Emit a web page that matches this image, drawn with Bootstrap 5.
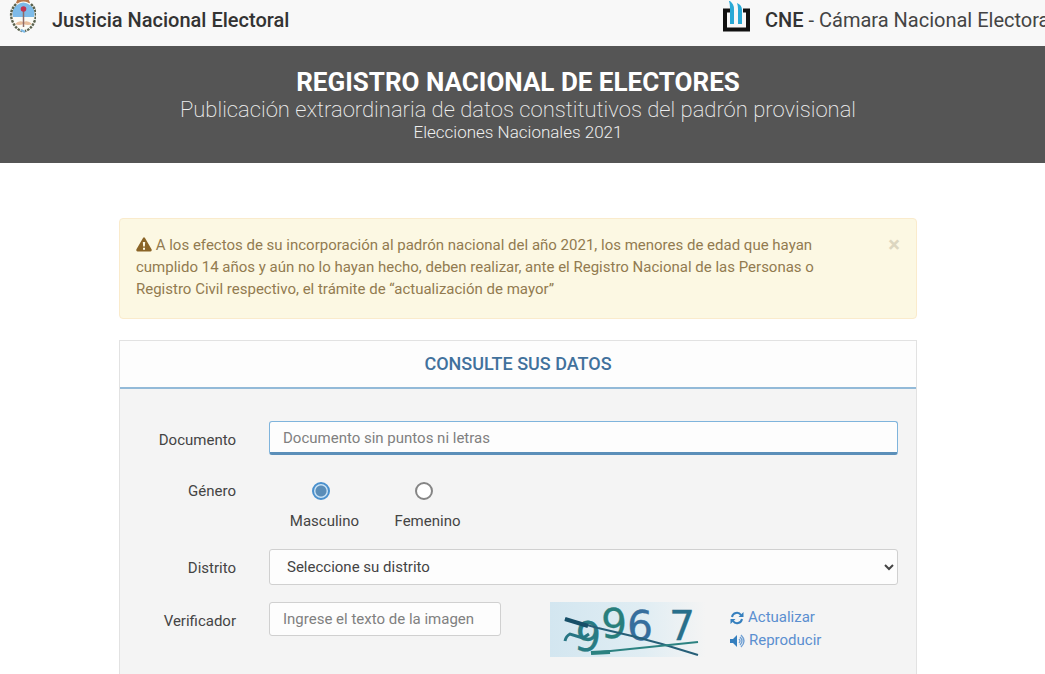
<!DOCTYPE html>
<html lang="es">
<head>
<meta charset="utf-8">
<meta name="viewport" content="width=device-width, initial-scale=1">
<title>Registro Nacional de Electores</title>
<link href="https://cdn.jsdelivr.net/npm/bootstrap@5.3.0/dist/css/bootstrap.min.css" rel="stylesheet">
<style>
body { font-family: Roboto, "Liberation Sans", sans-serif; font-size: 15px; line-height: 22px; color: #444; background: #fff; overflow-x: hidden; }
.topbar { height: 46px; background: #f8f8f8; overflow: hidden; white-space: nowrap; color: #444; font-size: 20px; line-height: 40px; }
.topbar a { color: inherit; }
.topbar strong { font-weight: 500; color: #333; }
.crest { width: 28px; height: 34px; }
.cne-logo { width: 30px; height: 34px; }
.topbar .court { width: 324px; gap: 14px; }
.hero { background: #555; color: #eee; padding: 21px 9px 20px 0; }
.hero h1 { font-size: 26px; line-height: 30px; font-weight: 700; color: #fff; }
.hero .subtitle { font-size: 22px; line-height: 25px; font-weight: 200; }
.hero .edition { font-size: 17px; line-height: 21px; font-weight: 300; }
.page-main { padding: 55px 9px 0 0; }
.column-main { max-width: 798px; }
.notice { background: #fcf8e3; border-color: #faebcc; color: #8a6d3b; padding: 15px 16px; min-height: 101px; margin-bottom: 21px; border-radius: 4px; }
.notice p { max-width: 700px; color: #927b50; }
.notice .dismiss { color: #dcd6c0; font-size: 22px; font-weight: 700; line-height: 22px; }
.panel-box { border: 1px solid #e2e2e2; background: #f4f4f4; border-radius: 0; min-height: 400px; }
.panel-box .card-header { background: #fdfdfd; border-bottom: 2px solid #93bad8; border-radius: 0; padding: 12px 0; }
.panel-box h2 { color: #41719c; font-size: 18px; line-height: 22px; font-weight: 500; }
.panel-box form { padding: 32px 18px 24px 0; }
.lbl { width: 116px; text-align: right; padding-top: 8px; }
.fields { margin-left: 33px; }
.field, .picker { font-size: 15px; line-height: 22px; border: 1px solid #d0d0d0; border-radius: 3px; background-color: #fdfdfd; color: #444; }
.field { padding: 5px 13px; }
.field::placeholder { color: #808080; opacity: 1; }
.field.active { border-color: #7fb4dc; border-bottom: 3px solid #5b8fb9; padding-bottom: 3px; }
.field.code { width: 232px; }
.picker { height: 36px; width: 100%; padding: 0 0 0 13px; }
.form-line { margin-bottom: 17px; }
.gender-list { padding-top: 10px; }
.gender { width: 103px; gap: 10px; }
.gender input { appearance: none; width: 18px; height: 18px; margin: 0; border: 2px solid #858585; border-radius: 50%; background: #fff; }
.gender input:checked { border-color: #4a90cd; background: radial-gradient(circle, #5a8db8 0 5px, #c9e2f5 6px 7px); }
.captcha { width: 156px; height: 55px; margin-left: 49px; overflow: visible; }
.tools { margin-left: 24px; padding-top: 4px; }
.tools button { color: #5b8fd0; line-height: 23px; font-size: 15px; }
</style>
<script src="https://cdn.jsdelivr.net/npm/bootstrap@5.3.0/dist/js/bootstrap.bundle.min.js"></script>
</head>
<body>
<header class="topbar d-flex justify-content-between">
  <a href="#" class="d-flex text-decoration-none ps-2">
    <svg class="crest flex-shrink-0" viewBox="0 0 28 34" aria-hidden="true">
      <path d="M8 3Q10-4 15-3Q20-4 22 3Q15 6 8 3Z" fill="#b8774a"/>
      <ellipse cx="15.500" cy="16" rx="11.500" ry="14.500" fill="#fbfbf6"/>
      <path d="M5 17Q3 9 9 5Q15 0 22 5Q28 9 26 17Z" fill="#7dbbe9"/>
      <path d="M7 24Q11 20 15.500 22Q20 20 24 24Q20 26 15.500 24Q11 26 7 24Z" fill="#e8bd9c"/>
      <path d="M15.500 10V27" stroke="#8d6a66" stroke-width="1.500"/>
      <circle cx="15.500" cy="9" r="2.800" fill="#c23350"/>
      <path d="M8 4Q1 11 4 20Q7 29 14 31M23 4Q30 11 27 20Q24 29 17 31" fill="none" stroke="#59614c" stroke-width="2.400" stroke-dasharray="2.500 1"/>
      <path d="M13 30l4 2" stroke="#7dbbe9" stroke-width="2"/>
    </svg>
    <strong class="ms-3">Justicia Nacional Electoral</strong>
  </a>
  <a href="#" class="court d-flex text-decoration-none">
    <svg class="cne-logo flex-shrink-0" viewBox="0 0 30 34" aria-hidden="true">
      <path d="M9 10.500H4V29.500H27V10.500H22" fill="none" stroke="#111" stroke-width="4"/>
      <path d="M9 1Q13 4 13 9V24H9V8Q9 4 8 1Z" fill="#29a9d6"/>
      <path d="M16 3Q21 5 21 10V24H17V9Q17 6 16 3Z" fill="#29a9d6"/>
    </svg>
    <span><strong>CNE</strong> - Cámara Nacional Electoral</span>
  </a>
</header>
<section class="hero text-center">
  <h1 class="m-0">REGISTRO NACIONAL DE ELECTORES</h1>
  <p class="subtitle m-0">Publicación extraordinaria de datos constitutivos del padrón provisional</p>
  <p class="edition m-0">Elecciones Nacionales 2021</p>
</section>
<main class="page-main">
  <div class="column-main mx-auto">
    <div class="notice alert d-flex justify-content-between align-items-start" role="alert">
      <p class="m-0"><svg class="align-text-bottom" width="16" height="18" viewBox="0 -1 16 18" aria-hidden="true"><path fill="#8a6427" fill-rule="evenodd" d="M7 1Q8-.500 9 1L15.700 12.500Q16 14.500 14.500 14.500H1.500Q0 14.500.300 12.500ZM6.800 5L7.200 9.500H8.800L9.200 5ZM7 10.700V12.700H9V10.700Z"/></svg> A los efectos de su incorporación al padrón nacional del año 2021, los menores de edad que hayan cumplido 14 años y aún no lo hayan hecho, deben realizar, ante el Registro Nacional de las Personas o Registro Civil respectivo, el trámite de “actualización de mayor”</p>
      <button type="button" class="dismiss btn p-0 border-0" data-bs-dismiss="alert" aria-label="Cerrar">×</button>
    </div>
    <section class="panel-box card">
      <div class="card-header text-center"><h2 class="m-0">CONSULTE SUS DATOS</h2></div>
      <form>
        <div class="d-flex form-line">
          <label class="lbl flex-shrink-0" for="doc">Documento</label>
          <div class="fields flex-grow-1"><input id="doc" class="field active form-control" type="text" placeholder="Documento sin puntos ni letras"></div>
        </div>
        <fieldset class="d-flex form-line" aria-labelledby="genero">
          <span id="genero" class="lbl flex-shrink-0">Género</span>
          <div class="fields gender-list d-flex">
            <label class="gender d-flex flex-column align-items-center"><input type="radio" name="genero" checked><span class="ps-2">Masculino</span></label>
            <label class="gender d-flex flex-column align-items-center"><input type="radio" name="genero"><span class="ps-2">Femenino</span></label>
          </div>
        </fieldset>
        <div class="d-flex form-line">
          <label class="lbl flex-shrink-0" for="distrito">Distrito</label>
          <div class="fields flex-grow-1"><select id="distrito" class="picker"><option>Seleccione su distrito</option></select></div>
        </div>
        <div class="d-flex align-items-start">
          <label class="lbl flex-shrink-0" for="codigo">Verificador</label>
          <div class="fields"><input id="codigo" class="field code form-control" type="text" placeholder="Ingrese el texto de la imagen"></div>
          <svg class="captcha flex-shrink-0" viewBox="0 0 156 55" role="img" aria-label="Imagen de verificación">
            <defs><linearGradient id="fade"><stop offset="0" stop-color="#d3e6f0"/><stop offset=".6" stop-color="#e0edf3"/><stop offset="1" stop-color="#f4f4f4"/></linearGradient></defs>
            <rect width="156" height="55" fill="url(#fade)"/>
            <g font-family="DejaVu Sans, sans-serif" font-size="41" stroke-width=".3">
              <text x="25" y="49" fill="#287b83" stroke="#287b83" transform="rotate(6 37 34)">9</text>
              <text x="51" y="36" fill="#287f7c" stroke="#287f7c">9</text>
              <text x="77" y="38" fill="#356e9d" stroke="#356e9d">6</text>
              <text x="119" y="38" fill="#286f8b" stroke="#286f8b">7</text>
            </g>
            <path d="M15 17L48 26L82 34L112 42L148 53" fill="none" stroke="#265f78" stroke-width="2"/>
            <path d="M15 17L38 24" stroke="#174f68" stroke-width="4"/>
            <path d="M41 51L148 40" stroke="#2c8281" stroke-width="2"/>
            <path d="M41 51L60 50" stroke="#2c8281" stroke-width="4"/>
            <path d="M15 39Q16 34 20 32L33 36L39 32" fill="none" stroke="#277583" stroke-width="3"/>
          </svg>
          <div class="tools d-flex flex-column align-items-start">
            <button type="button" class="btn p-0 border-0 d-flex align-items-center gap-1"><svg width="14" height="14" viewBox="0 0 14 14" aria-hidden="true"><path d="M2 6A5 5 0 0 1 11 4M12 8A5 5 0 0 1 3 10" fill="none" stroke="#357fbe" stroke-width="2"/><path d="M13.500 1V6H8.500ZM.500 13V8H5.500Z" fill="#357fbe"/></svg>Actualizar</button>
            <button type="button" class="btn p-0 border-0 d-flex align-items-center gap-1"><svg width="15" height="14" viewBox="0 0 15 14" aria-hidden="true"><path d="M0 5H3L7 1V13L3 9H0Z" fill="#357fbe"/><path d="M9 5Q11 7 9 9M10 3Q14 7 10 11M11 1Q17 7 11 13" fill="none" stroke="#6f9fd3" stroke-width="1.300"/></svg>Reproducir</button>
          </div>
        </div>
      </form>
    </section>
  </div>
</main>
</body>
</html>
